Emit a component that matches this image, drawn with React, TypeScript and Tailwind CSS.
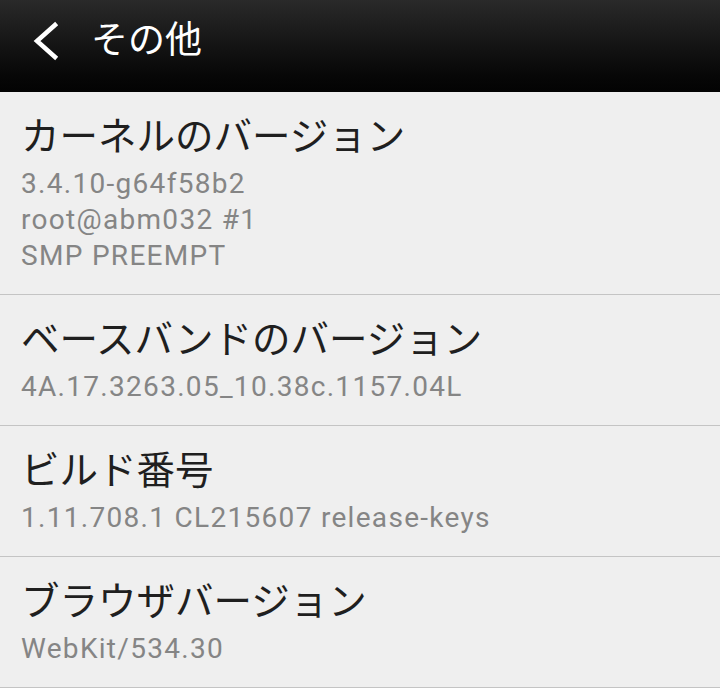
const rows = [
  {
    title: "カーネルのバージョン",
    lines: ["3.4.10-g64f58b2", "root@abm032 #1", "SMP PREEMPT"],
  },
  {
    title: "ベースバンドのバージョン",
    lines: ["4A.17.3263.05_10.38c.1157.04L"],
  },
  {
    title: "ビルド番号",
    lines: ["1.11.708.1 CL215607 release-keys"],
  },
  {
    title: "ブラウザバージョン",
    lines: ["WebKit/534.30"],
  },
];

export default function App() {
  return (
    <div
      className="w-[720px] h-[688px] overflow-hidden bg-[#efefef]"
      style={{ fontFamily: 'Roboto, "Noto Sans CJK JP", sans-serif' }}
    >
      {/* action bar */}
      <div className="h-[92px] flex items-center bg-gradient-to-b from-[#2a2a2a] to-[#030303]">
        <svg
          width="30"
          height="40"
          viewBox="0 0 30 40"
          className="ml-[31px] mb-[10px]"
        >
          <path
            d="M24 4 L6 20 L24 36"
            fill="none"
            stroke="white"
            strokeWidth="4.5"
            strokeLinecap="square"
          />
        </svg>
        <span className="ml-[30px] mb-[10px] text-[37px] leading-[48px] text-white">
          その他
        </span>
      </div>

      {rows.map((row) => (
        <div
          key={row.title}
          className="px-[21px] pt-[21px] pb-[20px] border-b-[1.5px] border-[#c4c4c4]"
        >
          <div className="text-[38.5px] leading-[48px] text-[#1f1f1f]">
            {row.title}
          </div>
          <div className="mt-[5px]">
            {row.lines.map((line) => (
              <div
                key={line}
                className="text-[28px] leading-[36px] tracking-[1.3px] text-[#858585]"
              >
                {line}
              </div>
            ))}
          </div>
        </div>
      ))}
    </div>
  );
}
